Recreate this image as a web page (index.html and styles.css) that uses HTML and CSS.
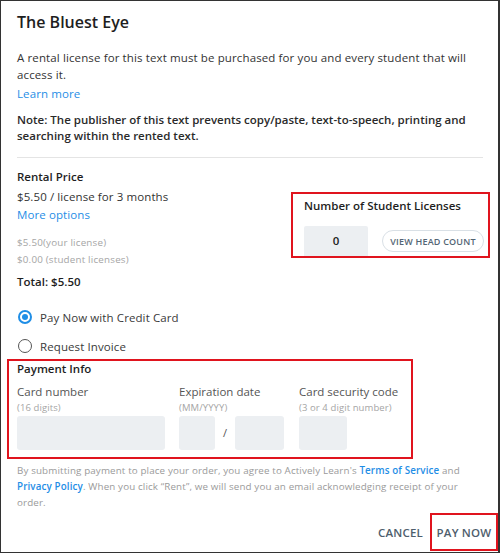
FILE: index.html
```html
<!DOCTYPE html>
<html>
<head>
<meta charset="utf-8">
<link rel="stylesheet" href="styles.css">
</head>
<body>
<div class="modal">
  <h1 class="title">The Bluest Eye</h1>
  <p class="intro">A rental license for this text must be purchased for you and every student that will access it.</p>
  <a class="link learn">Learn more</a>
  <p class="note">Note: The publisher of this text prevents copy/paste, text-to-speech, printing and searching within the rented text.</p>
  <div class="sep"></div>
  <div class="rental">
    <div class="rental-left">
      <div class="heading">Rental Price</div>
      <div class="price">$5.50 / license for 3 months</div>
      <a class="link more">More options</a>
      <div class="small first">$5.50(your license)</div>
      <div class="small">$0.00 (student licenses)</div>
      <div class="heading total">Total: $5.50</div>
    </div>
    <div class="licenses">
      <div class="heading">Number of Student Licenses</div>
      <div class="lic-row">
        <div class="count">0</div>
        <button class="pill">VIEW HEAD COUNT</button>
      </div>
    </div>
  </div>
  <label class="radio first-radio"><span class="dot checked"></span>Pay Now with Credit Card</label>
  <label class="radio"><span class="dot"></span>Request Invoice</label>
  <div class="payment">
    <div class="heading">Payment Info</div>
    <div class="fields">
      <div class="field">
        <div class="label">Card number</div>
        <div class="hint">(16 digits)</div>
        <div class="input card"></div>
      </div>
      <div class="field">
        <div class="label">Expiration date</div>
        <div class="hint">(MM/YYYY)</div>
        <div class="exp">
          <div class="input mm"></div>
          <span class="slash">/</span>
          <div class="input yy"></div>
        </div>
      </div>
      <div class="field">
        <div class="label">Card security code</div>
        <div class="hint">(3 or 4 digit number)</div>
        <div class="input cvc"></div>
      </div>
    </div>
  </div>
  <p class="terms">By submitting payment to place your order, you agree to Actively Learn's <a class="link b">Terms of Service</a> and <a class="link b">Privacy Policy</a>. When you click “Rent”, we will send you an email acknowledging receipt of your order.</p>
  <div class="actions">
    <button class="btn cancel">CANCEL</button>
    <button class="btn pay">PAY NOW</button>
  </div>
</div>
</body>
</html>
```
FILE: styles.css
```css
html, body { margin: 0; padding: 0; background: #fff; }
body { font-family: "Open Sans", "Liberation Sans", sans-serif; color: #333; }
.modal {
  width: 500px; height: 553px; box-sizing: border-box;
  border: 1px solid #333; border-right-width: 2px;
  padding: 0 15px 0 16px; overflow: hidden;
}
.title { margin: 10px 0 0; font-size: 16px; line-height: 22px; font-weight: 600; color: #1e1e1e; }
.intro { margin: 16px 0 0; font-size: 11.5px; line-height: 17px; letter-spacing: 0.12px; }
.link { color: #1f8ee6; text-decoration: none; }
.learn { display: block; margin-top: 2px; font-size: 11.5px; line-height: 17px; letter-spacing: 0.1px; }
.note { margin: 10px 0 0; font-size: 11.5px; line-height: 16px; font-weight: 600; color: #2a2a2a; }
.sep { margin-top: 13px; height: 1px; background: #e4e4e4; }
.rental { display: flex; justify-content: space-between; margin-top: 9px; }
.heading { font-size: 11.5px; line-height: 20px; font-weight: 600; color: #1e1e1e; }
.price { font-size: 11.5px; line-height: 20px; letter-spacing: 0.1px; }
.more { display: block; font-size: 11.5px; line-height: 16px; letter-spacing: 0.1px; }
.small { font-size: 9.8px; line-height: 17px; color: #a5a5a5; letter-spacing: 0.2px; }
.small.first { margin-top: 11px; }
.total { margin-top: 5px; line-height: 17px; }
.licenses {
  margin-top: 25px; margin-right: -7px; width: 199px; height: 66px; box-sizing: border-box;
  border: 2px solid #e0141e; padding: 4px 0 0 11px; overflow: hidden;
}
.licenses .heading { line-height: 16px; }
.lic-row { display: flex; align-items: flex-start; margin-top: 12px; }
.count {
  width: 64px; height: 32px; background: #eceff2; border-radius: 2px;
  font-size: 11.5px; font-weight: 600; text-align: center; line-height: 30px; color: #222;
}
.pill {
  margin: 4px 0 0 14px; height: 22px; width: 102px; padding: 0;
  border: 1px solid #d9e0e6; border-radius: 11px; background: #fff;
  font-family: inherit; font-size: 9px; font-weight: 600; color: #536474; letter-spacing: 0.2px;
}
.radio { display: flex; align-items: center; height: 20px; font-size: 11.5px; color: #3a3a3a; margin-top: 9px; letter-spacing: 0.1px; }
.radio.first-radio { margin-top: 17px; }
.dot {
  width: 14px; height: 14px; box-sizing: border-box; border-radius: 50%;
  border: 1.5px solid #555; margin: 0 8px 0 1px; position: relative;
}
.dot.checked { border: 2px solid #1f8ee6; }
.dot.checked::after {
  content: ""; position: absolute; left: 2px; top: 2px; width: 6px; height: 6px;
  border-radius: 50%; background: #1f8ee6;
}
.payment {
  margin: 3px 0 0 -10px; width: 406px; height: 100px; box-sizing: border-box;
  border: 2px solid #e0141e; padding: 0 0 0 8px;
}
.payment .heading { line-height: 16px; }
.fields { display: flex; margin-top: 6px; }
.field { margin-right: 14px; white-space: nowrap; }
.label { font-size: 11.5px; line-height: 17px; color: #555; }
.hint { font-size: 9.5px; line-height: 15px; color: #a5a5a5; letter-spacing: 0.1px; }
.input { height: 34px; background: #eceff2; border-radius: 3px; margin-top: 1px; }
.card { width: 148px; }
.exp { display: flex; align-items: center; }
.mm { width: 36px; }
.yy { width: 49px; }
.slash { width: 20px; text-align: center; font-size: 11px; color: #555; }
.cvc { width: 48px; }
.field:nth-child(2) { margin-right: 15px; }
.terms { margin: 4px 0 0; font-size: 9.8px; line-height: 16px; color: #9a9a9a; letter-spacing: 0.13px; }
.terms .b { font-weight: 600; }
.actions { display: flex; justify-content: flex-end; align-items: center; margin: 2px -15px 0 0; }
.btn {
  background: #fff; border: none; font-family: inherit; font-size: 11.5px; font-weight: 600;
  color: #4e5e6d; padding: 0; letter-spacing: 0.2px;
}
.cancel { margin-right: 7px; }
.pay { width: 68px; height: 38px; border: 2px solid #e0141e; }
```
